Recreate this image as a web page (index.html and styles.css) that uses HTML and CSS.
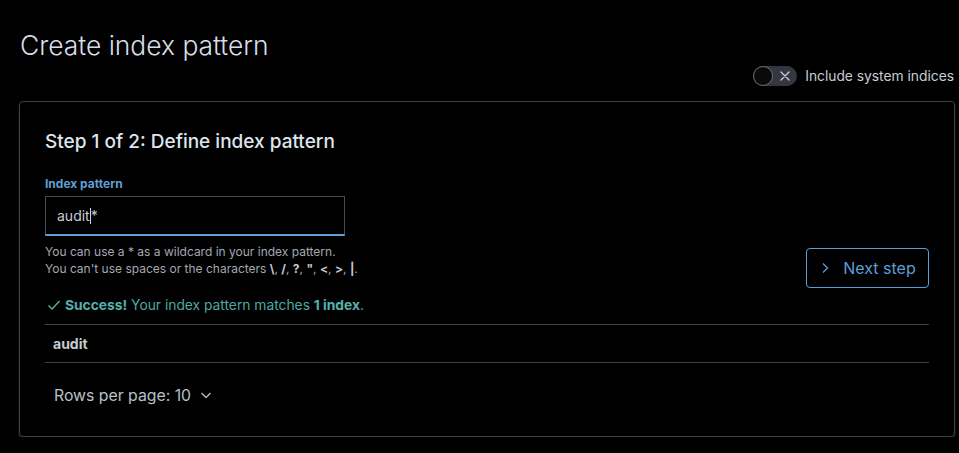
FILE: index.html
```html
<!DOCTYPE html>
<html>
<head>
<meta charset="utf-8">
<link rel="stylesheet" href="styles.css">
</head>
<body>
<div class="page">
  <h1 class="title">Create index pattern</h1>
  <div class="toggle-row">
    <span class="switch">
      <span class="knob"></span>
      <svg class="x-icon" width="12" height="12" viewBox="0 0 12 12"><path d="M2 2 L10 10 M10 2 L2 10" stroke="#c8ccd2" stroke-width="1.4" fill="none" stroke-linecap="round"/></svg>
    </span>
    <span class="toggle-label">Include system indices</span>
  </div>
  <div class="panel">
    <h2 class="step-title">Step 1 of 2: Define index pattern</h2>
    <div class="step-row">
      <div class="form">
        <label class="field-label">Index pattern</label>
        <div class="input"><span>audit</span><span class="caret"></span><span>*</span></div>
        <div class="help">
          <div>You can use a * as a wildcard in your index pattern.</div>
          <div>You can't use spaces or the characters <b>\</b>, <b>/</b>, <b>?</b>, <b>"</b>, <b>&lt;</b>, <b>&gt;</b>, <b>|</b>.</div>
        </div>
        <div class="success">
          <svg class="check" width="14" height="12" viewBox="0 0 14 12"><path d="M1.5 6.5 L5 10 L12.5 2" stroke="#54b3aa" stroke-width="1.3" fill="none"/></svg>
          <span><b>Success!</b> Your index pattern matches <b>1 index</b>.</span>
        </div>
      </div>
      <button class="next-btn">
        <svg width="12" height="12" viewBox="0 0 12 12"><path d="M4 1.5 L8.5 6 L4 10.5" stroke="#5b9fd8" stroke-width="1.3" fill="none"/></svg>
        <span>Next step</span>
      </button>
    </div>
    <div class="table">
      <div class="row">audit</div>
    </div>
    <div class="pager">
      <span>Rows per page: 10</span>
      <svg width="14" height="14" viewBox="0 0 14 14"><path d="M2.5 5 L7 9.5 L11.5 5" stroke="#b7bdc6" stroke-width="1.3" fill="none"/></svg>
    </div>
  </div>
</div>
</body>
</html>
```
FILE: styles.css
```css
* { box-sizing: border-box; }
html, body { margin: 0; padding: 0; background: #000; }
body {
  font-family: Inter, "Noto Sans", sans-serif;
  color: #dfe5ef;
}
.page {
  padding: 0 4px 0 19px;
}
.title {
  margin: 0;
  padding-top: 28px;
  font-size: 26.4px;
  font-weight: 300;
  line-height: 34px;
  color: #d9dee6;
  padding-left: 1px;
}
.toggle-row {
  display: flex;
  justify-content: flex-end;
  align-items: center;
  gap: 8px;
  margin-top: 4px;
  height: 20px;
  padding-right: 1px;
}
.switch {
  position: relative;
  display: inline-flex;
  align-items: center;
  justify-content: flex-end;
  width: 44px;
  height: 20px;
  border-radius: 10px;
  background: #343741;
  padding-right: 6px;
}
.knob {
  position: absolute;
  left: 0;
  top: 0;
  width: 20px;
  height: 20px;
  border-radius: 50%;
  background: #0a0a0a;
  border: 1px solid #6a6e75;
}
.toggle-label {
  font-size: 13.8px;
  color: #c9ccd4;
}
.panel {
  margin-top: 15px;
  border: 1px solid #3d3f45;
  border-radius: 4px;
  padding: 26px 25px 28px 25px;
  box-shadow: 0 2px 2px rgba(90, 90, 95, 0.6);
  height: 336px;
}
.step-title {
  margin: 0;
  font-size: 19px;
  font-weight: 500;
  line-height: 28px;
  color: #dfe5ef;
}
.step-row {
  display: flex;
  justify-content: space-between;
  margin-top: 19px;
}
.form { width: 600px; }
.field-label {
  display: block;
  font-size: 12px;
  font-weight: 700;
  color: #5f9fd6;
  line-height: 17px;
}
.input {
  margin-top: 4px;
  width: 300px;
  height: 40px;
  border: 1px solid #4a4c52;
  border-bottom: 2px solid #5f9fd6;
  display: flex;
  align-items: center;
  padding-left: 11px;
  font-size: 14px;
  color: #c9ccd3;
  background: #000;
}
.caret {
  display: inline-block;
  width: 1px;
  height: 16px;
  background: #d0d3d8;
}
.help {
  margin-top: 7px;
  font-size: 12px;
  line-height: 17px;
  color: #a4a8b2;
}
.help b { color: #c5c9d0; font-weight: 700; }
.success {
  margin-top: 18px;
  display: flex;
  align-items: center;
  gap: 4px;
  font-size: 13.8px;
  line-height: 20px;
  color: #4fa8a4;
  padding-left: 2px;
}
.success b { color: #56b1ab; font-weight: 700; }
.next-btn {
  margin-top: 73px;
  align-self: flex-start;
  width: 123px;
  height: 40px;
  border: 1px solid #5b9fd8;
  border-radius: 4px;
  background: #000;
  color: #5b9fd8;
  font-family: Inter, "Noto Sans", sans-serif;
  font-size: 16px;
  display: flex;
  align-items: center;
  justify-content: center;
  gap: 12px;
  padding: 0 12px;
}
.table {
  margin-top: 9px;
  border-top: 1px solid #3f4147;
  border-bottom: 1px solid #3f4147;
}
.row {
  height: 37px;
  display: flex;
  align-items: center;
  padding-left: 8px;
  font-size: 14px;
  font-weight: 700;
  color: #c6cad1;
}
.pager {
  margin-top: 20px;
  padding-left: 9px;
  display: flex;
  align-items: center;
  gap: 8px;
  font-size: 15.8px;
  color: #b9c0ca;
  height: 24px;
}
```
